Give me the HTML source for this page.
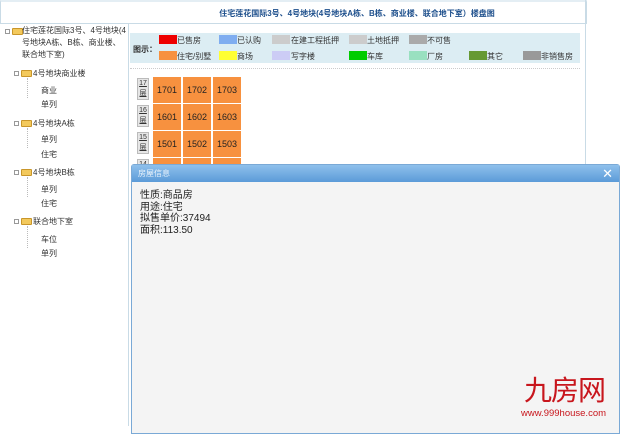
<!DOCTYPE html>
<html><head><meta charset="utf-8"><style>
*{margin:0;padding:0;box-sizing:border-box}
body{width:625px;height:426px;overflow:hidden;background:#fff;font-family:"Liberation Sans","Noto Sans CJK SC",sans-serif;font-size:8px;color:#333;position:relative}
.abs{position:absolute}
.hdr{left:0;top:0;width:587px;height:24px;border:1px solid #c9dbe6;border-top:2px solid #e4eef4;background:#fff}
.title{left:128px;top:8px;width:458px;text-align:center;color:#1d4f8c;font-weight:bold;font-size:8px}
.vline{left:128px;top:24px;width:1px;height:402px;background:#c9dbe6}
.rline{left:585px;top:0;width:1px;height:426px;background:#c9dbe6}
.leg{left:130px;top:33px;width:450px;height:30px;background:#dcedf3}
.sw{position:absolute;width:18px;height:9px}
.lt{position:absolute;font-size:8px;color:#333}
.dot{left:130px;top:68px;width:450px;border-top:1px dotted #ccc}
.fl{position:absolute;left:137px;width:12px;height:22px;background:#e6e6e6;border:1px solid #bbb;font-size:7px;text-align:center;line-height:10px;color:#333;text-decoration:underline}
.c{position:absolute;width:28px;height:26px;background:#f7913f;font-size:9px;text-align:center;line-height:26px;color:#222}
.tree div{position:absolute;font-size:8px;color:#333;white-space:nowrap}
.fold{display:inline-block;width:11px;height:7px;background:#f3c95c;border:1px solid #c9962a;border-radius:1px;vertical-align:middle;margin-right:1px}
.pm{display:inline-block;width:5px;height:5px;border:1px solid #999;vertical-align:middle;margin-right:2px}
.tree .ln{border-left:1px dotted #bbb;width:6px}
.dlg{left:131px;top:164px;width:489px;height:270px;border:1px solid #7aa9d6;background:#f4f4f4;border-radius:3px 3px 0 0}
.dh{height:17px;background:linear-gradient(#8ec0ec,#5b9bd8);color:#e8f2fb;font-size:8px;line-height:17px;padding-left:6px}
.x{position:absolute;right:6px;top:1px;color:#fff;font-size:13px;line-height:15px}
.body{padding:8px 0 0 8px;font-size:10px;line-height:11.5px;color:#222}
</style></head><body>
<div class="abs hdr"></div>
<div class="abs title">住宅莲花国际3号、4号地块(4号地块A栋、B栋、商业楼、联合地下室）楼盘图</div>
<div class="abs vline"></div>
<div class="abs rline"></div>
<div class="abs leg">
<div class="lt" style="left:3px;top:11px;font-weight:bold">图示：</div>
<div class="sw" style="left:29px;top:2px;background:#e00"></div><div class="lt" style="left:47px;top:2px">已售房</div>
<div class="sw" style="left:89px;top:2px;background:#7fadf0"></div><div class="lt" style="left:107px;top:2px">已认购</div>
<div class="sw" style="left:142px;top:2px;background:#ccc"></div><div class="lt" style="left:161px;top:2px">在建工程抵押</div>
<div class="sw" style="left:219px;top:2px;background:#ccc"></div><div class="lt" style="left:237px;top:2px">土地抵押</div>
<div class="sw" style="left:279px;top:2px;background:#aaa"></div><div class="lt" style="left:297px;top:2px">不可售</div>
<div class="sw" style="left:29px;top:18px;background:#f7913f"></div><div class="lt" style="left:47px;top:18px">住宅/别墅</div>
<div class="sw" style="left:89px;top:18px;background:#ffff33"></div><div class="lt" style="left:107px;top:18px">商场</div>
<div class="sw" style="left:142px;top:18px;background:#ccccf5"></div><div class="lt" style="left:161px;top:18px">写字楼</div>
<div class="sw" style="left:219px;top:18px;background:#00cc00"></div><div class="lt" style="left:237px;top:18px">车库</div>
<div class="sw" style="left:279px;top:18px;background:#99e0c0"></div><div class="lt" style="left:297px;top:18px">厂房</div>
<div class="sw" style="left:339px;top:18px;background:#669933"></div><div class="lt" style="left:357px;top:18px">其它</div>
<div class="sw" style="left:393px;top:18px;background:#999"></div><div class="lt" style="left:411px;top:18px">非销售房</div>
</div>
<div class="abs dot"></div>
<div class="fl" style="top:78px">17<br>层</div>
<div class="c" style="left:153px;top:77px">1701</div><div class="c" style="left:183px;top:77px">1702</div><div class="c" style="left:213px;top:77px">1703</div>
<div class="fl" style="top:105px">16<br>层</div>
<div class="c" style="left:153px;top:104px">1601</div><div class="c" style="left:183px;top:104px">1602</div><div class="c" style="left:213px;top:104px">1603</div>
<div class="fl" style="top:132px">15<br>层</div>
<div class="c" style="left:153px;top:131px">1501</div><div class="c" style="left:183px;top:131px">1502</div><div class="c" style="left:213px;top:131px">1503</div>
<div class="fl" style="top:159px">14<br>层</div>
<div class="c" style="left:153px;top:158px"></div><div class="c" style="left:183px;top:158px"></div><div class="c" style="left:213px;top:158px"></div>
<div class="tree">
<div style="left:5px;top:27px"><span class="pm"></span><span class="fold"></span></div>
<div style="left:22px;top:25px;line-height:12px;white-space:normal;width:104px">住宅莲花国际3号、4号地块(4号地块A栋、B栋、商业楼、联合地下室)</div>
<div style="left:14px;top:68px"><span class="pm"></span><span class="fold"></span>4号地块商业楼</div>
<div class="ln" style="left:27px;top:78px;height:20px"></div>
<div style="left:41px;top:85px">商业</div>
<div style="left:41px;top:99px">单列</div>
<div style="left:14px;top:118px"><span class="pm"></span><span class="fold"></span>4号地块A栋</div>
<div class="ln" style="left:27px;top:128px;height:20px"></div>
<div style="left:41px;top:134px">单列</div>
<div style="left:41px;top:149px">住宅</div>
<div style="left:14px;top:167px"><span class="pm"></span><span class="fold"></span>4号地块B栋</div>
<div class="ln" style="left:27px;top:177px;height:20px"></div>
<div style="left:41px;top:184px">单列</div>
<div style="left:41px;top:198px">住宅</div>
<div style="left:14px;top:216px"><span class="pm"></span><span class="fold"></span>联合地下室</div>
<div class="ln" style="left:27px;top:226px;height:22px"></div>
<div style="left:41px;top:234px">车位</div>
<div style="left:41px;top:248px">单列</div>
</div>
<div class="abs dlg">
<div class="dh">房屋信息<span class="x">✕</span></div>
<div class="body">性质:商品房<br>用途:住宅<br>拟售单价:37494<br>面积:113.50</div>
</div>
<div class="abs" style="left:524px;top:377px;color:#c8161d;font-size:28px;font-weight:normal;letter-spacing:-1px;line-height:28px">九房网</div>
<div class="abs" style="left:521px;top:408px;color:#c8161d;font-size:9.5px">www.999house.com</div>
</body></html>
